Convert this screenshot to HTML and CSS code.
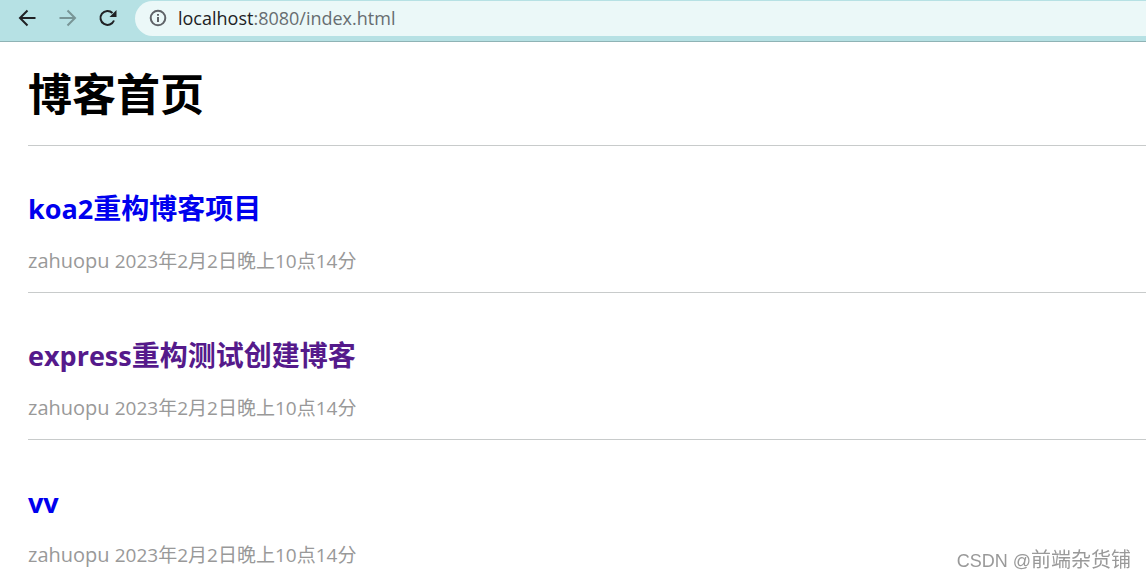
FILE: index.html
```html
<!DOCTYPE html>
<html lang="zh-CN">
<head>
<meta charset="utf-8">
<meta name="viewport" content="width=device-width, initial-scale=1">
<title>博客首页</title>
<link rel="stylesheet" href="styles.css">
</head>
<body>
<header class="toolbar">
  <nav class="nav-buttons" aria-label="浏览器导航">
    <button class="nav-button" type="button" aria-label="后退">
      <svg viewBox="0 0 20 20"><path d="M18.500 10H4M10.500 2.500L3 10L10.500 17.500"/></svg>
    </button>
    <button class="nav-button nav-button-muted" type="button" aria-label="前进">
      <svg viewBox="0 0 20 20"><path d="M2.500 10H17M10.500 2.500L18 10L10.500 17.500"/></svg>
    </button>
    <button class="nav-button" type="button" aria-label="重新加载">
      <svg viewBox="0 0 20 20"><path d="M17 12.500A7 7 0 1 1 15.500 5"/><path class="solid" d="M19.500 2V9H12.500Z"/></svg>
    </button>
  </nav>
  <div class="address">
    <svg class="info" viewBox="0 0 18 18"><circle cx="9" cy="9" r="7.300"/><path d="M9 8V13M9 5V6.800"/></svg>
    <span class="url">localhost<span class="path">:8080/index.html</span></span>
  </div>
</header>
<main class="page">
  <h1 class="page-title">博客首页</h1>
  <article class="post">
    <h3 class="post-title"><a class="post-link" href="#koa2"><span class="latin">koa2</span>重构博客项目</a></h3>
    <p class="post-meta">zahuopu <time class="post-date" datetime="2023-02-02T22:14">2023年2月2日晚上10点14分</time></p>
  </article>
  <article class="post">
    <h3 class="post-title"><a class="post-link post-link-read" href="#express"><span class="latin">express</span>重构测试创建博客</a></h3>
    <p class="post-meta">zahuopu <time class="post-date" datetime="2023-02-02T22:14">2023年2月2日晚上10点14分</time></p>
  </article>
  <article class="post">
    <h3 class="post-title"><a class="post-link" href="#vv"><span class="latin">vv</span></a></h3>
    <p class="post-meta">zahuopu <time class="post-date" datetime="2023-02-02T22:14">2023年2月2日晚上10点14分</time></p>
  </article>
</main>
<div class="watermark"><span class="watermark-site">CSDN @</span>前端杂货铺</div>
</body>
</html>
```
FILE: styles.css
```css
* {
  box-sizing: border-box;
}

body {
  margin: 0;
  background: #fff;
  color: #000;
  font-family: "Open Sans", "Noto Sans CJK SC", sans-serif;
  overflow: hidden;
}

.toolbar {
  display: flex;
  align-items: flex-start;
  gap: 18px;
  height: 42px;
  padding: 1px 0 0 17px;
  background: #b6e1e4;
  border-bottom: 1px solid #8fb3b5;
}

.nav-buttons {
  display: flex;
  gap: 20px;
  padding-top: 7px;
}

.nav-button {
  width: 20px;
  height: 20px;
  padding: 0;
  border: 0;
  background: none;
  color: #202124;
}

.nav-button-muted {
  color: #789596;
}

.nav-button svg {
  display: block;
  width: 20px;
  height: 20px;
  fill: none;
  stroke: currentColor;
  stroke-width: 2;
}

.nav-button .solid {
  fill: currentColor;
  stroke: none;
}

.address {
  display: flex;
  flex: 1;
  align-items: center;
  gap: 11px;
  height: 35px;
  padding: 0 0 1px 14px;
  background: #ebf8f8;
  border-radius: 18px 0 0 18px;
}

.info {
  width: 18px;
  height: 18px;
  fill: none;
  stroke: #5f6368;
  stroke-width: 2;
}

.url {
  color: #202124;
  font-size: 18px;
  line-height: 26px;
}

.path {
  color: #676d70;
}

.page {
  padding-left: 28px;
}

.page-title {
  margin: 0;
  padding: 22px 0 21px;
  font-size: 44px;
  line-height: 60px;
  border-bottom: 1px solid #c8cbcb;
}

.post {
  padding: 42px 0 17px;
  border-bottom: 1px solid #c8cbcb;
}

.post-title {
  margin: 0 0 18px;
  font-size: 28px;
  line-height: 40px;
}

.latin {
  font-size: 27px;
}

.post-link {
  color: #0000ee;
  text-decoration: none;
}

.post-link-read {
  color: #551a8b;
}

.post-meta {
  margin: 0;
  color: #999;
  font-size: 20px;
  line-height: 28px;
}

.post-date {
  font-size: 19px;
}

.watermark {
  position: fixed;
  right: 15px;
  bottom: 4px;
  color: #999;
  font-family: "Liberation Sans", "Noto Sans CJK SC", sans-serif;
  font-size: 20px;
  line-height: 28px;
}

.watermark-site {
  font-size: 18px;
}
```
